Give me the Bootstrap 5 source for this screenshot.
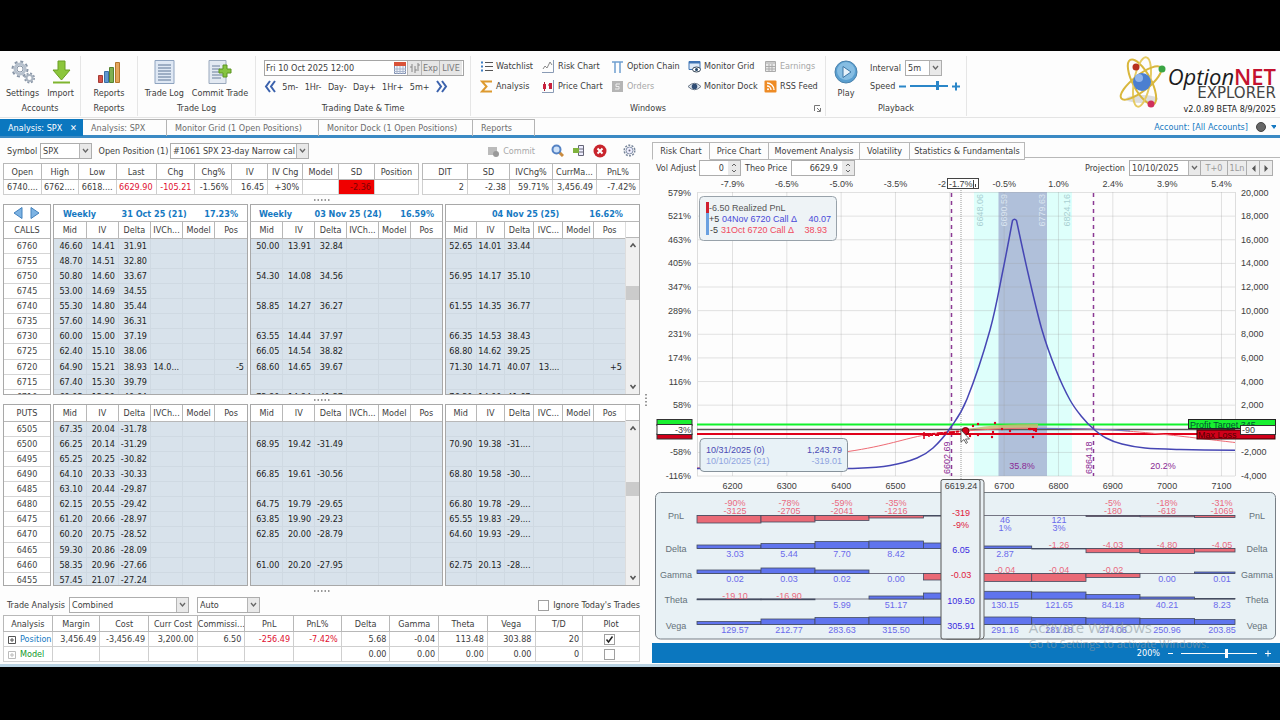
<!DOCTYPE html>
<html lang="en">
<head>
<meta charset="utf-8">
<meta name="viewport" content="width=device-width, initial-scale=1">
<title>OptionNET Explorer</title>
<link href="https://cdn.jsdelivr.net/npm/bootstrap@5.3.0/dist/css/bootstrap.min.css" rel="stylesheet">
<style>
:root{--ui:"DejaVu Sans Condensed","DejaVu Sans",sans-serif;--blue:#0b77bf;--line:#b4b4b4;--ink:#3c3c3c}
body{background:#000;padding-top:51px;font-family:var(--ui);font-size:9px;line-height:12px;color:var(--ink)}
button,input,select{font:inherit;color:inherit}
button{background:none;border:0;padding:0;white-space:nowrap}
label{white-space:nowrap}
a{color:inherit;text-decoration:none}
.app{background:#fdfdfd;border-bottom:3px solid #b9d3e3;padding-bottom:1px}
/* ribbon */
.ribbon{height:67px;border-bottom:1px solid #e4e4e4}
.rgroup{border-right:1px solid #e6e6e6;height:60px;margin-top:5px;white-space:nowrap}
.rbody{height:45px}
.rtitle{text-align:center;line-height:14px}
.big svg{display:block;margin:1px auto 3px;width:24px;height:24px}
.big{text-align:center}
.g-acc{width:81px}.g-rep{width:57px}.g-log{width:118px}.g-date{width:215px}.g-win{width:355px}.g-play{width:141px}
.datebox{width:200px;height:16px;border:1px solid #a5a5a5;background:#fff}
.datebox input{border:0;background:none;width:127px;padding:0 1px;outline:0}
.tbtn{border-left:1px solid #b5b5b5;background:#e6e6e6;color:#777;flex:none;width:18px}
.tbtn.live{width:23px}
.tbtn.step{width:14px}
.wins{display:grid;grid-template-columns:62px 69px 77px 76px 62px;grid-auto-rows:20px;padding-left:9px}
.wins button{display:flex;align-items:center;gap:3px;text-align:left}
.wins svg{width:13px;height:13px;flex:none}
.off{color:#a8a8a8}
.sel{appearance:none;border:1px solid #adadad;border-radius:0;height:16px;padding:0 12px 0 2px;background:#fff url("data:image/svg+xml,%3Csvg xmlns='http://www.w3.org/2000/svg' width='12' height='14'%3E%3Crect width='12' height='14' fill='%23e9e9e9'/%3E%3Cpath d='M.5 0v14' stroke='%23b5b5b5'/%3E%3Cpath d='M4 5l2.500 3 2.500-3' fill='none' stroke='%23666' stroke-width='1.300'/%3E%3C/svg%3E") right center no-repeat}
.brand{font-family:"Open Sans","Noto Sans",sans-serif;color:#1c1c1c}
.brand .b1{font-size:22px;line-height:26px}
.brand .b1 b{color:#c4122f;font-weight:600}
.brand .b2{font:15px/14px "DejaVu Sans",sans-serif;color:#444;margin-top:-3px}
.brand .b3{font:9px/12px var(--ui);margin-top:3px}
/* document tabs */
.doctabs{height:20px;border-bottom:3px solid #3b8ac4;padding-top:1px}
.doctabs button{border:1px solid #b4b4b4;border-bottom:0;border-left:0;text-align:left;padding-left:8px;color:#6c6c6c;height:17px}
.doctabs button.on{background:var(--blue);color:#fff;border-color:var(--blue)}
.acct{color:#1679c2}
.work{display:grid;grid-template-columns:652fr 628fr}
.leftp{padding:0 12px 0 3px;min-width:0}
.gt{width:100%;table-layout:fixed;border-collapse:collapse;border:1px solid #a8a8a8;background:#fff}
.gt th,.gt td{border:1px solid #cfcfcf;padding:0 3px 0 0;text-align:right;white-space:nowrap;overflow:hidden;height:15px;line-height:14px;font-weight:400}
.gt th{text-align:center;padding:0;border-color:#b8b8b8;height:16px}
.red{color:#e0102f}
.split{text-align:center;color:#777;line-height:9px;height:9px}
.split svg,.vsplit svg{display:block;margin:auto}
.chain{display:grid;grid-template-columns:48fr 195fr 193fr 195fr;gap:2px;overflow:hidden}
.chain .pane{overflow:hidden;border:1px solid #a8a8a8;min-width:0;display:flex}
.chain .gt{border:0;flex:1}
.chain .gt tr>:first-child{border-left:0}
.chain .gt tr>:last-child{border-right:0}
.chain td{background:#d8e2eb;border-color:#cfd9e2;color:#222}
.chain .stk td{background:#fff;text-align:center;padding:0;color:#444;border-color:#d5d5d5}
.chead{display:flex;justify-content:space-between;color:#1679c2;font-weight:700;line-height:18px;height:17px;padding:0 9px;border:1px solid #a8a8a8;border-bottom:0;background:#fff}
.calls .pane{height:174px;border-top-color:#b8b8b8}
.puts .pane{height:182px}
.pane .gt{height:183px}
.pane .gt th{border-top:0}
.sbar{width:14px;background:#f0f0f0;flex:none;display:flex;flex-direction:column;align-items:center;border-left:1px solid #ddd}
.sbar i{display:block;width:13px;height:14px;background:#cbcbcb}
.sbar .cap{height:16px;background:#fff;border-bottom:1px solid #b8b8b8;width:13px}
.tick{appearance:none;width:11px;height:11px;border:1px solid #a0a0a0;background:#fff;display:inline-block;vertical-align:middle;margin:0}
.tick:checked{background:#fff url("data:image/svg+xml,%3Csvg xmlns='http://www.w3.org/2000/svg' width='9' height='9'%3E%3Cpath d='M1.500 4.500l2 2.500 4-5.500' fill='none' stroke='%23222' stroke-width='1.500'/%3E%3C/svg%3E") center no-repeat}
.vsplit{position:absolute;right:5px;top:256px}
/* right panel */
.ctabs button{border:1px solid #b8b8b8;border-left:0;height:18px;text-align:center}
.ctabs button.on{border-bottom-color:#fdfdfd;border-left:1px solid #b8b8b8}
.ctabs .fill{border-bottom:1px solid #b8b8b8}
.num{border:1px solid #adadad;height:16px;background:#fff;display:flex}
.num input{border:0;outline:0;text-align:right;padding:0 4px 0 0;width:100%;min-width:0;background:none}
.num svg{flex:none}
.mini{border:1px solid #adadad;border-left:0;background:#ececec;color:#999;height:16px;text-align:center}
.ctrls{padding:0 7px 0 4px}
.chart{display:block;width:100%;height:auto;font-family:"Liberation Sans",Arial,sans-serif;font-size:9px}
.statusbar{background:var(--blue);color:#fff;height:20px;padding-right:9px}
input[type=range]{appearance:none;background:none;height:10px}
input[type=range]::-webkit-slider-runnable-track{height:1px;background:currentColor}
input[type=range]::-webkit-slider-thumb{appearance:none;width:3px;height:9px;margin-top:-4px;background:currentColor}
.speed{color:#2a86c8}
.speed::-webkit-slider-runnable-track{height:2px!important}
.wmark{position:absolute;left:60%;bottom:11px;font-family:"Open Sans",sans-serif;color:#8f9ba3;opacity:.6;pointer-events:none;white-space:nowrap}
.wmark .w1{font-size:15px;line-height:18px}.wmark .w2{font-size:11px;line-height:16px}
</style>
</head>
<body>
<div class="app">
<header class="ribbon d-flex">
  <section class="rgroup g-acc"><div class="rbody d-flex justify-content-center gap-2">
    <button class="big"><svg viewBox="0 0 24 24"><g fill="none" stroke="#8a97a8"><circle cx="9" cy="9" r="5" stroke-width="3" stroke="#b7c1cd"/><circle cx="9" cy="9" r="7.500" stroke-width="2" stroke-dasharray="3 2.900"/><circle cx="9" cy="9" r="3"/><circle cx="18.500" cy="18" r="3" stroke-width="2" stroke="#aab4c0"/><circle cx="18.500" cy="18" r="4.700" stroke-width="1.500" stroke-dasharray="2 1.700"/></g></svg>Settings</button>
    <button class="big"><svg viewBox="0 0 24 24"><path d="M9 1h7v9h5l-8.500 10L4 10h5z" fill="#8cc63c" stroke="#6b9e24"/><path d="M4 22.500h17" stroke="#7fb52f" stroke-width="2"/></svg>Import</button></div>
    <div class="rtitle">Accounts</div></section>
  <section class="rgroup g-rep"><div class="rbody d-flex justify-content-center">
    <button class="big"><svg viewBox="0 0 24 24"><path d="M1.500 15.500h4v7h-4z" fill="#d6534a" stroke="#a63c35"/><path d="M7.500 11.500h4v11h-4z" fill="#5f97cf" stroke="#3a6ea5"/><path d="M12.500 7.500h4v15h-4z" fill="#7fb052" stroke="#55832f"/><path d="M18.500 2.500h4v20h-4z" fill="#e3a55c" stroke="#b5762c"/></svg>Reports</button></div>
    <div class="rtitle">Reports</div></section>
  <section class="rgroup g-log"><div class="rbody d-flex justify-content-center gap-2">
    <button class="big"><svg viewBox="0 0 24 24"><path d="M3 .5h19v23H3z" fill="#dfe8f4" stroke="#8ea3bf"/><path d="M6 5h13M6 8h13M6 11h13M6 14h13M6 17h13M6 20h13" stroke="#5d7494"/></svg>Trade Log</button>
    <button class="big"><svg viewBox="0 0 24 24"><path d="M1 .5h17v23H1z" fill="#e3e9f2" stroke="#9aa9bd"/><path d="M4 6h8M4 9h8M4 12h8M4 15h11M4 18h9" stroke="#6b7f9c"/><path d="M15 5h4v4h4v4h-4v4h-4v-4h-4V9h4z" fill="#86c440" stroke="#5c9422"/></svg>Commit Trade</button></div>
    <div class="rtitle">Trade Log</div></section>
  <section class="rgroup g-date"><div class="rbody px-2 pt-1">
    <div class="datebox d-flex"><input aria-label="Date" value="Fri 10 Oct 2025 12:00">
      <svg width="15" height="14" viewBox="0 0 15 14"><path d="M2.500 1.500h11v11h-11z" fill="#f2f5fb" stroke="#7f8fb0"/><path d="M2 1h12v4H2z" fill="#d9533a"/><path d="M5 5v8M8 5v8M11 5v8M2 8h12M2 10.500h12" stroke="#a9b5cc"/></svg>
      <button class="tbtn step" aria-label="Step"><svg width="12" height="12" viewBox="0 0 12 12"><path d="M3 2v8M6 4v7M9 1v8M1 5h2M6 8h2M9 3h2" stroke="#888" fill="none"/></svg></button>
      <button class="tbtn">Exp</button><button class="tbtn live">LIVE</button></div>
    <div class="d-flex justify-content-between align-items-center mt-1" style="width:184px"><button aria-label="Back"><svg width="12" height="13" viewBox="0 0 12 13"><path d="M6 1L2 6.500 6 12M11 1L7 6.500 11 12" stroke="#3b62ad" stroke-width="2" fill="none"/></svg></button><button>5m-</button><button>1Hr-</button><button>Day-</button><button>Day+</button><button>1Hr+</button><button>5m+</button><button aria-label="Forward"><svg width="12" height="13" viewBox="0 0 12 13"><path d="M1 1l4 5.500L1 12M6 1l4 5.500L6 12" stroke="#3b62ad" stroke-width="2" fill="none"/></svg></button></div></div>
    <div class="rtitle">Trading Date &amp; Time</div></section>
  <section class="rgroup g-win position-relative"><div class="rbody wins">
    <button><svg viewBox="0 0 13 13"><path d="M1 2.500h2M1 6.500h2M1 10.500h2" stroke="#3f7fc4" stroke-width="2"/><path d="M5 2.500h8M5 6.500h8M5 10.500h8" stroke="#555"/></svg>Watchlist</button>
    <button><svg viewBox="0 0 13 13"><path d="M11.500 0v12.500H0" stroke="#8a9bb5" fill="none"/><path d="M1 9l2-3 2 2 3-6 2 3" stroke="#888" fill="none"/></svg>Risk Chart</button>
    <button><svg viewBox="0 0 13 13"><path d="M1 2h11M4 2v11M9 2v11" stroke="#6f9fd0" stroke-width="1.500"/></svg>Option Chain</button>
    <button><svg viewBox="0 0 13 13"><path d="M1 1.500h11v8H1z" fill="#dce9f7" stroke="#3f74b5"/><path d="M1 2.500h11" stroke="#3f74b5" stroke-width="2"/><ellipse cx="8.500" cy="9.500" rx="4" ry="2.500" fill="#fff" stroke="#345"/><circle cx="8.500" cy="9.500" r="1.500" fill="#246"/></svg>Monitor Grid</button>
    <button class="off"><svg viewBox="0 0 13 13"><path d="M1.500 1.500h10v10h-10z" fill="#e8e8e8" stroke="#aaa"/><path d="M1 3h11M5 4v8M8 4v8M2 6.500h10M2 9h10" stroke="#aaa"/></svg>Earnings</button>
    <button><svg viewBox="0 0 13 13"><path d="M11 2.500V1.500H2l4.500 5L2 11.500h9v-1" stroke="#dd9a2f" stroke-width="2" fill="none"/></svg>Analysis</button>
    <button><svg viewBox="0 0 13 13"><path d="M11.500 0v12.500H0" stroke="#8a9bb5" fill="none"/><path d="M2.500 2v9M6 5h3" stroke="#a23"/><path d="M1 4h3v5H1zM7 3h3v6H7z" fill="#c8203c"/></svg>Price Chart</button>
    <button class="off"><svg viewBox="0 0 13 13"><path d="M1 1h11v11H1z" fill="#b5b5b5"/><path d="M9 4H5v2.500h3V9H4" stroke="#eee" fill="none"/></svg>Orders</button>
    <button><svg viewBox="0 0 13 13"><path d="M0 6.500Q6.500 0 13 6.500 6.500 13 0 6.500z" fill="#dfe6ee" stroke="#6a7787"/><circle cx="6.500" cy="6.500" r="2.800" fill="#2f4d74"/></svg>Monitor Dock</button>
    <button><svg viewBox="0 0 13 13"><rect x=".5" y=".5" width="12" height="12" rx="1" fill="#ee8b25"/><path d="M3 3a7 7 0 017 7M3 6a4 4 0 014 4" stroke="#fff" fill="none" stroke-width="1.300"/><circle cx="4" cy="9.300" r="1" fill="#fff"/></svg>RSS Feed</button></div>
    <div class="rtitle">Windows</div>
    <svg class="position-absolute bottom-0 end-0 me-1 mb-1" width="7" height="7" viewBox="0 0 7 7"><path d="M.5 6V.5H6M3 3l3 3M6.500 3v3.500H3" stroke="#777" fill="none"/></svg></section>
  <section class="rgroup g-play"><div class="rbody d-flex ps-2 gap-2">
    <button class="big"><svg viewBox="0 0 24 24"><circle cx="12" cy="12" r="11" fill="#5a9fd0" stroke="#4a82ac"/><circle cx="12" cy="11" r="9" fill="#86bde2"/><path d="M9 6.500l8 5.500-8 5.500z" fill="#e8f3fb" stroke="#3c76a6"/></svg>Play</button>
    <div class="ps-1 pt-1"><div class="d-flex align-items-center gap-1"><label for="iv">Interval</label><select class="sel" id="iv" style="width:37px"><option>5m</option></select></div>
    <div class="d-flex align-items-center gap-1 mt-1"><label for="spd">Speed</label><svg width="7" height="9"><path d="M0 4.500h7" stroke="#2a86c8" stroke-width="2"/></svg><input class="speed" id="spd" type="range" value="72" style="width:38px"><svg width="8" height="9"><path d="M0 4.500h8M4 .5v8" stroke="#2a86c8" stroke-width="2"/></svg></div></div></div>
    <div class="rtitle">Playback</div></section>
  <div class="brand ms-auto d-flex pt-1 pe-1">
    <svg width="50" height="54" viewBox="0 0 50 54"><ellipse cx="24" cy="44" rx="16" ry="4" fill="#ddd"/><g fill="none" stroke="#d9b73c" stroke-width="2"><ellipse cx="24" cy="27" rx="9" ry="25" transform="rotate(-28 24 27)"/><ellipse cx="24" cy="27" rx="8" ry="25" transform="rotate(10 24 27)" stroke="#e6cb62"/><ellipse cx="23" cy="28" rx="8" ry="25" transform="rotate(52 23 28)"/></g><circle cx="24" cy="27" r="9" fill="#4b7fd0"/><circle cx="21" cy="23" r="4" fill="#8fb4ec"/><circle cx="18" cy="12" r="3.500" fill="#b8321f"/><circle cx="44" cy="14" r="3.500" fill="#3aa544"/><circle cx="33" cy="49" r="3.500" fill="#d0305c"/></svg>
    <div class="text-end pt-2"><div class="b1"><i>Option</i><b>NET</b></div><div class="b2">EXPLORER</div><div class="b3">v2.0.89 BETA 8/9/2025</div></div>
  </div>
</header>
<nav class="doctabs d-flex">
  <button class="on" style="width:83px">Analysis: SPX &nbsp; <b>✕</b></button><button style="width:84px">Analysis: SPX</button><button style="width:152px">Monitor Grid (1 Open Positions)</button><button style="width:154px">Monitor Dock (1 Open Positions)</button><button style="width:62px">Reports</button>
  <div class="acct ms-auto d-flex align-items-center gap-2 pe-1"><a href="#">Account: [All Accounts]</a><svg width="20" height="10"><circle cx="5" cy="5" r="4.500" fill="#666" stroke="#444"/><path d="M15 3h6l-3 4z" fill="#1679c2"/></svg></div>
</nav>
<main class="work">
<div class="leftp position-relative">
  <div class="d-flex align-items-center" style="height:25px"><label class="ms-1" for="sym" style="width:33px">Symbol</label><select class="sel" id="sym" style="width:52px"><option>SPX</option></select>
    <label class="ms-1" for="pos" style="width:74px">&nbsp;Open Position (1)</label><select class="sel" id="pos" style="width:139px"><option>#1061 SPX 23-day Narrow cal</option></select>
    <div class="ms-auto d-flex align-items-center gap-2"><button class="off d-flex align-items-center gap-1"><svg width="12" height="12"><path d="M1 2h9v8H1z" fill="#bbb"/><circle cx="9" cy="9" r="3" fill="#999"/></svg>Commit</button>
    <button class="ms-2" aria-label="Find"><svg width="13" height="13"><path d="M8 8l4 4" stroke="#c98b3f" stroke-width="3"/><circle cx="5.500" cy="5.500" r="4" fill="#cfe2f8" stroke="#5583c4" stroke-width="2"/></svg></button>
    <button aria-label="Layout"><svg width="13" height="13"><path d="M6.500 1.500h5v10h-5zM6 5h6M6 8h6" fill="#eef" stroke="#667"/><path d="M1 4h6v5H1z" fill="#7fb23c"/></svg></button>
    <button aria-label="Close"><svg width="14" height="14"><circle cx="7" cy="7" r="6.500" fill="#c9252d"/><path d="M4.500 4.500l5 5M9.500 4.500l-5 5" stroke="#fff" stroke-width="2"/></svg></button>
    <button class="ms-2 me-1" aria-label="Options"><svg width="13" height="13"><circle cx="6.500" cy="6.500" r="5.300" fill="none" stroke="#76849a" stroke-width="1.500" stroke-dasharray="2 1.300"/><circle cx="6.500" cy="6.500" r="3.500" fill="#eef" stroke="#8592a8"/><circle cx="6.500" cy="6.500" r="1" fill="#667"/></svg></button></div></div>
  <div class="d-grid" style="grid-template-columns:416fr 218fr;gap:3px">
    <table class="gt" id="q1"></table><table class="gt" id="q2"></table></div>
  <div class="split dots"></div>
  <div class="chain"><div class="chead justify-content-center align-items-center px-0"><svg width="28" height="14"><path d="M9 1.500v11L1 7z" fill="#7db3e3" stroke="#4381bd"/><path d="M18 1.500v11L26 7z" fill="#7db3e3" stroke="#4381bd"/></svg></div>
    <div class="chead"><span>Weekly</span><span class="ms-2">31 Oct 25 (21)</span><span>17.23%</span></div><div class="chead ps-2 pe-1"><span>Weekly</span><span class="ms-1">03 Nov 25 (24)</span><span class="me-1">16.59%</span></div><div class="chead pe-3 ps-2"><span></span><span class="ms-2">04 Nov 25 (25)</span><span>16.62%</span></div></div>
  <div class="chain calls" id="calls"></div>
  <div class="split dots"></div>
  <div class="chain puts" id="puts"></div>
  <div class="split dots"></div>
  <div class="d-flex align-items-center ps-1" style="height:20px"><label for="ta" style="width:62px">Trade Analysis</label><select class="sel" id="ta" style="width:120px"><option>Combined</option></select><select class="sel ms-2" aria-label="Mode" style="width:63px"><option>Auto</option></select>
    <div class="ms-auto d-flex align-items-center gap-1"><input class="tick" type="checkbox" id="ign"><label for="ign">Ignore Today's Trades</label></div></div>
  <table class="gt" id="ta-t"></table>
  <div class="vsplit"><svg width="2" height="14"><path d="M1 0v14" stroke="#777" stroke-width="1.500" stroke-dasharray="1.500 2"/></svg></div>
</div>
<div class="position-relative">
  <div class="ctabs d-flex pt-1" style="height:20px"><button class="on" style="width:58px">Risk Chart</button><button style="width:59px">Price Chart</button><button style="width:91px">Movement Analysis</button><button style="width:50px">Volatility</button><button style="width:115px">Statistics &amp; Fundamentals</button><div class="fill flex-fill"></div></div>
  <div class="ctrls d-flex align-items-center" style="height:20px"><label for="va" style="width:43px">Vol Adjust</label>
    <div class="num" style="width:42px"><input id="va" value="0"><svg width="12" height="14"><path d="M0 0h12v14H0z" fill="#e9e9e9"/><path d="M4 5l2-2 2 2M4 9l2 2 2-2" stroke="#666" fill="none"/></svg></div>
    <label for="tp" class="ms-1" style="width:46px">Theo Price</label>
    <div class="num" style="width:64px"><input id="tp" value="6629.9"><svg width="12" height="14"><path d="M0 0h12v14H0z" fill="#e9e9e9"/><path d="M4 5l2-2 2 2M4 9l2 2 2-2" stroke="#666" fill="none"/></svg></div>
    <label for="pr" class="ms-auto me-1">Projection</label><select class="sel" id="pr" style="width:72px"><option>10/10/2025</option></select><button class="mini" style="width:27px">T+0</button><button class="mini" style="width:19px">1Ln</button><button class="mini" style="width:13px" aria-label="Previous"><svg width="5" height="7"><path d="M4.500 0v7L1 3.500z" fill="#555"/></svg></button><button class="mini" style="width:13px" aria-label="Next"><svg width="5" height="7"><path d="M.5 0v7L4 3.500z" fill="#555"/></svg></button></div>
  <svg class="chart" id="chart" viewBox="652 178 628 465"></svg>
  <div class="statusbar d-flex align-items-center justify-content-end gap-2"><label for="zm">200%</label><svg width="5" height="9"><path d="M0 4.500h5" stroke="#fff"/></svg><input id="zm" type="range" value="60" style="width:76px"><svg width="6" height="9"><path d="M0 4.500h6M3 1.500v6" stroke="#fff"/></svg></div>
  <div class="wmark"><div class="w1">Activate Windows</div><div class="w2">Go to Settings to activate Windows.</div></div>
</div>
</main>
</div>
<script>
const $ = id => document.getElementById(id);
document.querySelectorAll('.dots').forEach(d => d.innerHTML = '<svg width="16" height="9"><path d="M0 5h16" stroke="#777" stroke-width="1.500" stroke-dasharray="1.500 2"/></svg>');
const cols = w => { const t = w.reduce((a, b) => a + b); return '<colgroup>' + w.map(x => `<col style="width:${(x / t * 100).toFixed(2)}%">`).join('') + '</colgroup>'; };
const head = h => '<thead><tr>' + h.map(x => `<th>${x}</th>`).join('') + '</tr></thead>';
$('q1').innerHTML = cols([38,37,38,40,39,37,36,35,36,36,44]) + head(['Open','High','Low','Last','Chg','Chg%','IV','IV Chg','Model','SD','Position']) +
  '<tbody><tr><td>6740....</td><td>6762....</td><td>6618....</td><td class="red">6629.90</td><td class="red">-105.21</td><td>-1.56%</td><td>16.45</td><td>+30%</td><td></td><td style="background:#f00000;color:#7c0000">-2.36</td><td></td></tr></tbody>';
$('q2').innerHTML = cols([45,42,43,44,43]) + head(['DIT','SD','IVChg%','CurrMa...','PnL%']) + '<tbody><tr><td>2</td><td>-2.38</td><td>59.71%</td><td>3,456.49</td><td>-7.42%</td></tr></tbody>';

/* option chains: strikes, then one block of rows per expiry */
function chain(id, label, strikes, groups) {
  let h = `<div class="pane"><table class="gt stk">${head([label])}<tbody>${strikes.map(s => `<tr><td>${s}</td></tr>`).join('')}</tbody></table></div>`;
  groups.forEach((g, i) => {
    const last = i === 2;
    h += `<div class="pane"><table class="gt">${cols(last ? [30,29,29,29,31,31] : [1,1,1,1,1,1])}${head(['Mid','IV','Delta', last ? 'IVC...' : 'IVCh...','Model','Pos'])}<tbody>` +
      g.split('|').map(r => { const c = r.trim() ? r.trim().split(' ') : []; return '<tr>' + [0,1,2,3,4,5].map(k => `<td>${c[k] && c[k] !== '_' ? c[k] : ''}</td>`).join('') + '</tr>'; }).join('') + '</tbody></table>' +
      (last ? `<div class="sbar"><div class="cap"></div><svg width="8" height="14"><path d="M1.500 9L4 6l2.500 3" stroke="#555" fill="none" stroke-width="1.500"/></svg><i style="margin-top:${id === 'calls' ? 34 : 47}px"></i><svg class="mt-auto" width="8" height="14"><path d="M1.500 5L4 8l2.500-3" stroke="#555" fill="none" stroke-width="1.500"/></svg></div>` : '') + '</div>';
  });
  $(id).innerHTML = h;
}
const down = (a, n) => Array.from({length: n}, (_, i) => a - 5 * i);
chain('calls', 'CALLS', down(6760, 11), [
 '46.60 14.41 31.91|48.70 14.51 32.80|50.80 14.60 33.67|53.00 14.69 34.55|55.30 14.80 35.44|57.60 14.90 36.31|60.00 15.00 37.19|62.40 15.10 38.06|64.90 15.21 38.93 14.0... _ -5|67.40 15.30 39.79|69.95 15.39 40.64',
 '50.00 13.91 32.84||54.30 14.08 34.56||58.85 14.27 36.27||63.55 14.44 37.97|66.05 14.54 38.82|68.60 14.65 39.67||73.80 14.84 41.37',
 '52.65 14.01 33.44||56.95 14.17 35.10||61.55 14.35 36.77||66.35 14.53 38.43|68.80 14.62 39.25|71.30 14.71 40.07 13.... _ +5||76.30 14.90 41.67']);
chain('puts', 'PUTS', down(6505, 11), [
 '67.35 20.04 -31.78|66.25 20.14 -31.29|65.25 20.25 -30.82|64.10 20.33 -30.33|63.10 20.44 -29.87|62.15 20.55 -29.42|61.20 20.66 -28.97|60.20 20.75 -28.52|59.30 20.86 -28.09|58.35 20.96 -27.66|57.45 21.07 -27.24',
 '|68.95 19.42 -31.49||66.85 19.61 -30.56||64.75 19.79 -29.65|63.85 19.90 -29.23|62.85 20.00 -28.79||61.00 20.20 -27.95|',
 '|70.90 19.38 -31....||68.80 19.58 -30....||66.80 19.78 -29....|65.55 19.83 -29....|64.60 19.93 -29....||62.75 20.13 -28....|']);
const plus = c => `<svg width="8" height="8" class="mx-1"><path d="M.5.5h7v7h-7zM2 4h4M4 2v4" fill="none" stroke="${c}"/></svg>`;
$('ta-t').innerHTML = cols([49,48,49,49,48,49,48,49,49,49,48,48,57]) + head(['Analysis','Margin','Cost','Curr Cost','Commissi...','PnL','PnL%','Delta','Gamma','Theta','Vega','T/D','Plot']) +
  `<tbody><tr><td class="text-start pe-0" style="color:#1679c2">${plus('#555')}Position</td><td>3,456.49</td><td>-3,456.49</td><td>3,200.00</td><td>6.50</td><td class="red">-256.49</td><td class="red">-7.42%</td><td>5.68</td><td>-0.04</td><td>113.48</td><td>303.88</td><td>20</td><td class="text-center"><input class="tick" type="checkbox" checked aria-label="Plot position"></td></tr>
  <tr><td class="text-start" style="color:#119a2a">${plus('#bbb')}Model</td><td></td><td></td><td></td><td></td><td></td><td></td><td>0.00</td><td>0.00</td><td>0.00</td><td>0.00</td><td>0</td><td class="text-center"><input class="tick" type="checkbox" aria-label="Plot model"></td></tr></tbody>`;

/* risk chart */
let s = '';
const T = (x, y, t, a = 'middle', f = '#3c3c3c', e = '') => s += `<text x="${x}" y="${y + 3}" text-anchor="${a}" fill="${f}" ${e}>${t}</text>`;
const R = (x, y, w, h, f, st = 'none', r = 0) => s += `<rect x="${x}" y="${y}" width="${w}" height="${h}" fill="${f}" stroke="${st}" rx="${r}"/>`;
const P = (d, st, w = 1, e = '') => s += `<path d="${d}" fill="none" stroke="${st}" stroke-width="${w}" ${e}/>`;
const px = p => 732.5 + (p - 6200) * 0.5433, gy = i => 192.5 + i * 23.63;
const spline = p => p.reduce((d, q, i) => { if (!i) return `M${q}`; const a = p[Math.max(i - 2, 0)], b = p[i - 1], n = p[Math.min(i + 1, p.length - 1)];
  return d + `C${b[0] + (q[0] - a[0]) / 6} ${b[1] + (q[1] - a[1]) / 6} ${q[0] - (n[0] - b[0]) / 6} ${q[1] - (n[1] - b[1]) / 6} ${q}`; }, '');
R(974, 192, 98, 284, '#defffb'); R(998.5, 192, 48.5, 284, '#b0c0da');
for (let i = 0; i < 13; i++) if (i !== 10) P(`M697 ${gy(i)}H1235`, '#999', 1, 'opacity=".28"');
for (let i = 0; i < 10; i++) P(`M${px(6200 + i * 100)} 192V476`, '#999', 1, 'opacity=".28"');
P('M697.5 192V476M1235.500 192V476', '#ddd'); P('M961 190V480', '#999', 1, 'stroke-dasharray="1 1"');
['579','521','463','405','347','289','231','174','116','58','','-58','-116'].forEach((v, i) => v && T(691, gy(i), v + '%', 'end'));
['20,000','18,000','16,000','14,000','12,000','10,000','8,000','6,000','4,000','2,000','','-2,000','-4,000'].forEach((v, i) => v && T(1241, gy(i), v, 'start'));
['-7.9','-6.5','-5.0','-3.5','','-0.5','1.0','2.4','3.9','5.4'].forEach((v, i) => { v && T(px(6200 + i * 100), 184, v + '%'); i !== 4 && T(px(6200 + i * 100), 486, 6200 + i * 100); });
T(938, 184, '-2', 'start'); R(947.5, 178.5, 31, 10, '#fff', '#444'); T(949, 184, '-1.7%', 'start'); P('M973.5 180v8M975.500 184v3', '#444');
[[983, '6648.06', '#a9cfd2'], [1007, '6690.59', '#dbe5f0'], [1045, '6779.63', '#dbe5f0'], [1070, '6824.16', '#a9cfd2']].forEach(([x, t, c]) => T(0, -3, t, 'end', c, `transform="translate(${x} 194) rotate(-90)"`));
P('M951.500 193V476M1093.500 193V476', '#8b3a94', 1.500, 'stroke-dasharray="4 4"');
P('M697 429.500H1235', '#555', 1.500); P('M697 424.500H1235', '#12f22c', 2); P('M697 434H1235', '#e0001a', 2);
s += '<path d="M960 431Q985 424 1038 424V429H975z" fill="#c9b86a" opacity=".8"/>';
P(spline([[697, 468], [848, 451.5], [925, 435], [965, 431], [1010, 428.5], [1060, 428.5], [1110, 430], [1160, 434], [1235, 442.5]]), '#ee6a74', 1);
P('M1030 428.500Q1090 428 1130 431', '#6a78c8', 1);
P(spline([[697, 468.5], [800, 468.5], [858, 468.2], [890, 465.5], [917, 458], [933, 448], [951, 427], [967, 399], [990, 330], [1003, 270], [1012.5, 220.5]]) + 'Q1014.500 218 1016.500 220.500' +
  spline([[1016.5, 220.5], [1028, 273], [1042, 330], [1056, 370], [1070, 400], [1082, 417], [1093, 428.5], [1106, 438], [1122, 444], [1145, 448], [1180, 449.500], [1235, 450.300]]).slice(1).replace(/^[^C]*/, ''), '#4646b4', 1.500);
P('M925 434.500l35-3M923 435h16M940 434h30', '#d8001a', 2, 'stroke-dasharray="6 1 3 2"'); P('M924 432v7M929 433v4', '#d8001a', 1.5);
[[973,426],[978,424],[995,423],[992,437],[978,435],[993,432],[1002,429],[1010,431],[1033,437],[1034,430],[1030,429],[1036,431],[970,436]].forEach(p => s += `<circle cx="${p[0]}" cy="${p[1]}" r="1.200" fill="#d8001a"/>`);
P('M1028 429H1037', '#d8001a', 2);
s += '<circle cx="965.500" cy="431" r="3.500" fill="#d0001a" stroke="#700"/><path d="M961 430v12l3-2.500 2 4 1.500-1-2-3.500h4z" fill="#fff" stroke="#444" stroke-width=".8"/>';
T(0, -3, '6602.69', 'start', '#8b2a94', 'transform="translate(950 474) rotate(-90)"'); T(0, -3, '6864.18', 'start', '#8b2a94', 'transform="translate(1092 474) rotate(-90)"');
T(1022, 466, '35.8%', 'middle', '#8b2a94'); T(1163, 466, '20.2%', 'middle', '#8b2a94');
R(657, 419.5, 35, 6, '#18f030', '#333'); R(657, 434, 35, 5, '#d0001a', '#333'); R(657, 424.500, 35, 10, '#fff', '#333'); T(691, 430, '-3%', 'end');
R(1188.500, 419.500, 87, 9, '#18f030', '#222'); T(1190, 425, 'Profit Target 345', 'start', '#053'); R(1197, 430, 78, 9, '#d0001a', '#300'); T(1198, 435, 'Max Loss', 'start', '#500'); R(1240.500, 425.500, 35, 9, '#fff', '#333'); T(1242, 430, '-90', 'start');
R(699.500, 196.500, 137, 44, '#eef3f6', '#98a2aa', 4); R(706, 202, 3, 11, '#d02030'); R(706, 213, 3, 22, '#6aa0e0');
T(709, 208, '-6.50 Realized PnL', 'start', '#555'); T(709, 219, '+5', 'start'); T(722, 219, '04Nov 6720 Call Δ', 'start', '#4a4ad8'); T(831, 219, '40.07', 'end', '#4a4ad8'); T(710, 230, '-5', 'start'); T(721, 230, '31Oct 6720 Call Δ', 'start', '#f04a60'); T(827, 230, '38.93', 'end', '#f04a60');
R(700, 438.500, 147.500, 33, '#e8f2f7', '#87929b', 4);
T(706, 450, '10/31/2025 (0)', 'start', '#4a4ab4'); T(842, 450, '1,243.79', 'end', '#4a4ab4'); T(706, 461, '10/10/2025 (21)', 'start', '#8fa4e0'); T(842, 461, '-319.01', 'end', '#8fa4e0');
/* greeks table */
R(655.500, 492.500, 620, 146.500, '#e8f1f5', '#777f86', 5);
const E = [697, 761, 815, 869, 923.5, 978, 1031.7, 1086, 1140, 1194.5, 1235], C = [735, 789, 842, 896, 950, 1005, 1059, 1113, 1167, 1222];
const rows = [
 ['PnL', 515.5, 515.500, [7.5,6.5,5,2.500,.6,0,0,1,1.300,2], null],
 ['Delta', 548.5, 549, [-3.5,-5,-7,-7.500,-5.5,-2.500,.5,4.200,5,3.5], ['3.03','5.44','7.70','8.42','','2.87','-1.26','-4.03','-4.80','-4.05']],
 ['Gamma', 573.5, 574.500, [-3.500,-5.500,-3.500,0,6.500,8,8,4,0,-1.500], ['0.02','0.03','0.02','0.00','','-0.04','-0.04','-0.02','0.00','0.01']],
 ['Theta', 599, 600, [.8,.8,0,-3,-6,-7.700,-7,-4.500,-2,-.5], ['-19.10','-16.90','5.99','51.17','','130.15','121.65','84.18','40.21','8.23']],
 ['Vega', 624.5, 625.500, [-3,-5.500,-7,-7.5,-7.5,-7.5,-7,-6.500,-6,-5], ['129.57','212.77','283.63','315.50','','291.16','281.18','274.06','250.96','203.85']]];
rows.forEach(([n, b, ly, v, t]) => {
  T(676, ly, n, 'middle', '#66727a'); T(1257, ly, n, 'middle', '#66727a'); P(`M697 ${b}H1235`, '#556', .8);
  v.forEach((h, i) => h && R(E[i], Math.min(b, b + h), E[i + 1] - E[i], Math.abs(h), h < 0 ? '#5f74ee' : '#ea6a76', '#444c60" stroke-width=".8'));
  if (t) t.forEach((x, i) => x && T(C[i], x[0] === '-' ? b - 3.500 : b + 5.500, x, 'middle', x[0] === '-' ? '#ea6a80' : '#6a6aec'));
});
[['-90%','-3125'],['-78%','-2705'],['-59%','-2041'],['-35%','-1216'],0,0,0,['-5%','-180'],['-18%','-618'],['-31%','-1069']].forEach((a, i) => a && (T(C[i], 503, a[0], 'middle', '#ea6a80'), T(C[i], 511, a[1], 'middle', '#ea6a80')));
T(1005, 520, '46', 'middle', '#6a6aec'); T(1005, 528, '1%', 'middle', '#6a6aec'); T(1059, 520, '121', 'middle', '#6a6aec'); T(1059, 528, '3%', 'middle', '#6a6aec');
R(944, 479.500, 40, 159.500, '#e8eff3', '#666', 3); R(941, 479.500, 39, 159.500, '#eaf1f5', '#555', 2);
T(961, 486, '6619.24'); T(961, 512.500, '-319', 'middle', '#e0203c'); T(961, 524.500, '-9%', 'middle', '#e0203c'); T(961, 549.500, '6.05', 'middle', '#3a2ae0'); T(961, 575, '-0.03', 'middle', '#e0203c'); T(961, 601, '109.50', 'middle', '#3a2ae0'); T(961, 626, '305.91', 'middle', '#3a2ae0');
$('chart').innerHTML = s;
</script>
<script src="https://cdn.jsdelivr.net/npm/bootstrap@5.3.0/dist/js/bootstrap.bundle.min.js"></script>
</body>
</html>
